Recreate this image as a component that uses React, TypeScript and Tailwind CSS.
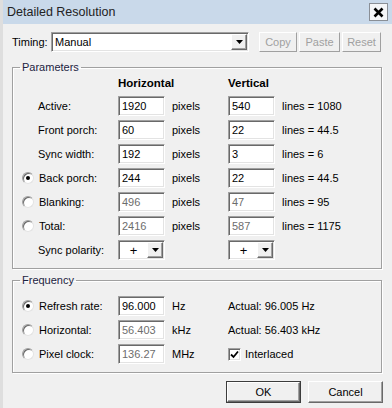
import React from 'react';

const sunken =
  'border border-t-[#a0a0a0] border-l-[#a0a0a0] border-r-white border-b-white shadow-[inset_1px_1px_0_#696969,inset_-1px_-1px_0_#e3e3e3]';
const raised =
  'border border-t-white border-l-white border-r-[#696969] border-b-[#696969] shadow-[inset_-1px_-1px_0_#a0a0a0]';
const flatBtn =
  'border border-t-white border-l-white border-r-[#a0a0a0] border-b-[#a0a0a0]';

function Field({ value, disabled }: { value: string; disabled?: boolean }) {
  return (
    <div
      className={`w-[47px] h-[20px] bg-white pl-[3px] flex items-center ${sunken} ${
        disabled ? 'text-[#6d6d6d]' : 'text-black'
      }`}
    >
      {value}
    </div>
  );
}

function Arrow() {
  return (
    <div className={`w-[16px] h-[16px] mr-[1px] bg-[#f0f0f0] flex items-center justify-center ${raised}`}>
      <svg width="7" height="4" viewBox="0 0 7 4">
        <path d="M0 0h7L3.5 4z" fill="#000" />
      </svg>
    </div>
  );
}

function Radio({ checked }: { checked?: boolean }) {
  return (
    <span className="w-[12px] h-[12px] rounded-full bg-white border border-t-[#a0a0a0] border-l-[#a0a0a0] border-r-[#e3e3e3] border-b-[#e3e3e3] shadow-[inset_1px_1px_0_#696969] flex items-center justify-center">
      {checked && <span className="w-[4px] h-[4px] rounded-full bg-black" />}
    </span>
  );
}

function Label({ text, radio }: { text: string; radio?: 'on' | 'off' }) {
  return (
    <div className="w-[105px] flex items-center">
      {radio ? (
        <>
          <span className="ml-[9px]">
            <Radio checked={radio === 'on'} />
          </span>
          <span className="ml-[5px]">{text}</span>
        </>
      ) : (
        <span className="pl-[25px]">{text}</span>
      )}
    </div>
  );
}

type Row = { label: string; radio?: 'on' | 'off'; h: string; v: string; lines: string; disabled?: boolean };

const rows: Row[] = [
  { label: 'Active:', h: '1920', v: '540', lines: 'lines = 1080' },
  { label: 'Front porch:', h: '60', v: '22', lines: 'lines = 44.5' },
  { label: 'Sync width:', h: '192', v: '3', lines: 'lines = 6' },
  { label: 'Back porch:', radio: 'on', h: '244', v: '22', lines: 'lines = 44.5' },
  { label: 'Blanking:', radio: 'off', h: '496', v: '47', lines: 'lines = 95', disabled: true },
  { label: 'Total:', radio: 'off', h: '2416', v: '587', lines: 'lines = 1175', disabled: true },
];

function Polarity() {
  return (
    <div className={`w-[47px] h-[20px] bg-white flex items-center ${sunken}`}>
      <span className="flex-1 text-center text-[13px] leading-none pl-[1px]">+</span>
      <Arrow />
    </div>
  );
}

const freq = [
  { label: 'Refresh rate:', radio: 'on' as const, value: '96.000', unit: 'Hz', extra: 'Actual: 96.005 Hz' },
  { label: 'Horizontal:', radio: 'off' as const, value: '56.403', unit: 'kHz', extra: 'Actual: 56.403 kHz', disabled: true },
  { label: 'Pixel clock:', radio: 'off' as const, value: '136.27', unit: 'MHz', extra: '', disabled: true },
];

export default function App() {
  return (
    <div className="w-[392px] h-[408px] flex bg-[#f0f0f0] text-[11px] text-black font-['Liberation_Sans',Arial,sans-serif] overflow-hidden">
      <div className="w-[3px] h-full bg-[#dedede]" />
      <div className="flex-1 flex flex-col">
        {/* title bar */}
        <div className="h-[24px] bg-[#c9d9ea] flex items-center pl-[4px] pr-[4px]">
          <span className="flex-1 text-[12.5px] text-[#222]">Detailed Resolution</span>
          <div className="w-[19px] h-[18px] bg-[#f4f6f8] border border-[#8a8f96] flex items-center justify-center">
            <svg width="11" height="11" viewBox="0 0 11 11">
              <path d="M1.5 1.5L9.5 9.5M9.5 1.5L1.5 9.5" stroke="#000" strokeWidth="2.6" />
            </svg>
          </div>
        </div>

        {/* timing row */}
        <div className="mt-[8px] h-[20px] flex items-center pl-[9px]">
          <span className="w-[39px]">Timing:</span>
          <div className={`w-[198px] h-[20px] bg-white flex items-center ${sunken}`}>
            <span className="flex-1 pl-[3px]">Manual</span>
            <Arrow />
          </div>
          <div className="ml-[10px] flex gap-[2px] text-[#a0a0a0]">
            <div className={`w-[38px] h-[20px] flex items-center justify-center ${flatBtn}`}>Copy</div>
            <div className={`w-[41px] h-[20px] flex items-center justify-center ${flatBtn}`}>Paste</div>
            <div className={`w-[39px] h-[20px] flex items-center justify-center ${flatBtn}`}>Reset</div>
          </div>
        </div>

        {/* parameters */}
        <fieldset className="mt-[8px] ml-[9px] w-[370px] border border-[#a0a0a0] shadow-[inset_1px_1px_0_white,1px_1px_0_white] pb-[8px]">
          <legend className="ml-[7px] px-[2px] leading-[15px] text-[#1c2340]">Parameters</legend>
          <div className="pt-[1px] flex flex-col gap-[4px]">
            <div className="h-[16px] flex items-center font-bold text-[11.5px]">
              <span className="w-[105px]" />
              <span className="w-[110px]">Horizontal</span>
              <span>Vertical</span>
            </div>
            {rows.map((r) => (
              <div key={r.label} className="h-[20px] flex items-center">
                <Label text={r.label} radio={r.radio} />
                <Field value={r.h} disabled={r.disabled} />
                <span className="w-[63px] pl-[7px]">pixels</span>
                <Field value={r.v} disabled={r.disabled} />
                <span className="pl-[7px]">{r.lines}</span>
              </div>
            ))}
            <div className="h-[20px] flex items-center">
              <Label text="Sync polarity:" />
              <Polarity />
              <span className="w-[63px]" />
              <Polarity />
            </div>
          </div>
        </fieldset>

        {/* frequency */}
        <fieldset className="mt-[4px] ml-[9px] w-[370px] border border-[#a0a0a0] shadow-[inset_1px_1px_0_white,1px_1px_0_white] pb-[8px]">
          <legend className="ml-[7px] px-[2px] leading-[15px] text-[#1c2340]">Frequency</legend>
          <div className="pt-[8px] flex flex-col gap-[4px]">
            {freq.map((f) => (
              <div key={f.label} className="h-[20px] flex items-center">
                <Label text={f.label} radio={f.radio} />
                <Field value={f.value} disabled={f.disabled} />
                <span className="w-[63px] pl-[7px]">{f.unit}</span>
                {f.extra ? (
                  <span>{f.extra}</span>
                ) : (
                  <div className="flex items-center">
                    <span className={`w-[13px] h-[13px] bg-white flex items-center justify-center ${sunken}`}>
                      <svg width="9" height="9" viewBox="0 0 9 9">
                        <path d="M1 4.5L3.5 7L8 1.5" stroke="#000" strokeWidth="1.8" fill="none" />
                      </svg>
                    </span>
                    <span className="ml-[4px]">Interlaced</span>
                  </div>
                )}
              </div>
            ))}
          </div>
        </fieldset>

        {/* buttons */}
        <div className="mt-[8px] flex justify-end gap-[7px] pr-[9px]">
          <div className="w-[75px] h-[22px] border border-[#3c3c3c]">
            <div className={`w-full h-full flex items-center justify-center ${raised}`}>OK</div>
          </div>
          <div className={`w-[75px] h-[22px] flex items-center justify-center ${raised}`}>Cancel</div>
        </div>
      </div>
    </div>
  );
}
